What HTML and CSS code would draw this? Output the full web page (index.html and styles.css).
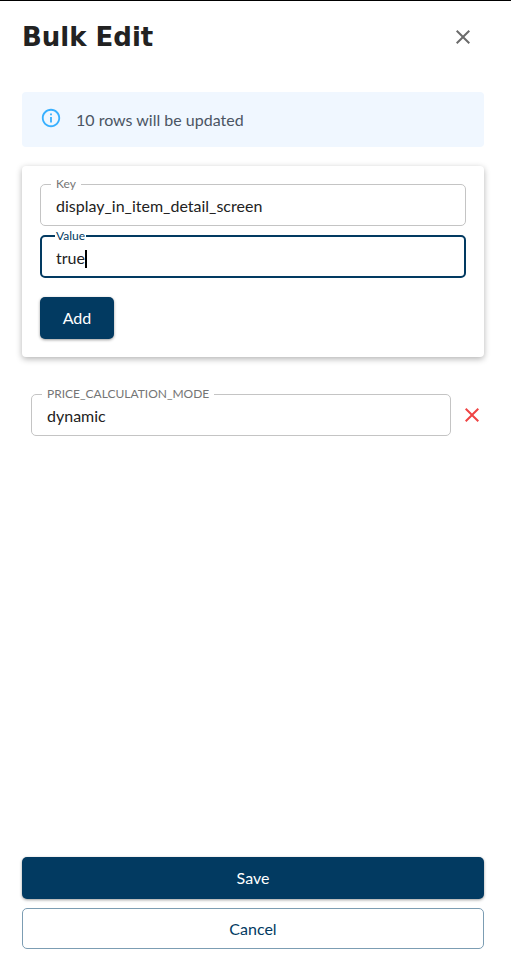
FILE: index.html
```html
<!DOCTYPE html>
<html lang="en">
<head>
    <meta charset="UTF-8">
    <meta name="viewport" content="width=device-width, initial-scale=1.0">
    <title>Bulk Edit</title>
    <link rel="stylesheet" href="styles.css">
</head>
<body>
    <div class="drawer">
        <div class="drawer-header">
            <h1 class="drawer-title">Bulk Edit</h1>
            <svg class="close-icon" width="24" height="24" viewBox="0 0 24 24">
                <path d="M19 6.41 17.59 5 12 10.59 6.41 5 5 6.41 10.59 12 5 17.59 6.41 19 12 13.41 17.59 19 19 17.59 13.41 12z"/>
            </svg>
        </div>

        <div class="info-alert">
            <svg class="info-icon" width="22" height="22" viewBox="0 0 24 24">
                <path d="M11 7h2v2h-2zm0 4h2v6h-2zm1-9C6.48 2 2 6.48 2 12s4.480 10 10 10 10-4.480 10-10S17.520 2 12 2zm0 18c-4.410 0-8-3.590-8-8s3.590-8 8-8 8 3.590 8 8-3.590 8-8 8z"/>
            </svg>
            <span>10 rows will be updated</span>
        </div>

        <div class="add-card">
            <fieldset class="field key-field">
                <legend>Key</legend>
                <div class="field-value">display_in_item_detail_screen</div>
            </fieldset>
            <fieldset class="field value-field">
                <legend>Value</legend>
                <div class="field-value">true<span class="caret"></span></div>
            </fieldset>
            <button class="btn btn-primary add-btn">Add</button>
        </div>

        <div class="attr-row">
            <fieldset class="field attr-field">
                <legend>PRICE_CALCULATION_MODE</legend>
                <div class="field-value">dynamic</div>
            </fieldset>
            <svg class="remove-icon" width="24" height="24" viewBox="0 0 24 24">
                <path d="M19 6.41 17.59 5 12 10.59 6.41 5 5 6.41 10.59 12 5 17.59 6.41 19 12 13.41 17.59 19 19 17.59 13.41 12z"/>
            </svg>
        </div>

        <div class="drawer-footer">
            <button class="btn btn-primary save-btn">Save</button>
            <button class="btn btn-outline cancel-btn">Cancel</button>
        </div>
    </div>
</body>
</html>
```
FILE: styles.css
```css
* {
    box-sizing: border-box;
}

body {
    margin: 0;
    background-color: #fff;
    font-family: 'Lato', sans-serif;
}

.drawer {
    height: 967px;
    border-top: 1px solid #000;
    padding: 0 27px 18px 22px;
    display: flex;
    flex-direction: column;
}

.drawer-header {
    display: flex;
    justify-content: space-between;
    align-items: center;
    height: 72px;
    padding-bottom: 1px;
    padding-right: 9px;
}

.drawer-title {
    margin: 0;
    font-family: 'DejaVu Sans', sans-serif;
    font-size: 26px;
    font-weight: 700;
    color: #222;
}

.close-icon {
    fill: #6b6b6b;
}

.info-alert {
    width: 462px;
    height: 55px;
    margin-top: 19px;
    padding-left: 18px;
    display: flex;
    align-items: center;
    gap: 14px;
    background-color: #f0f7ff;
    border-radius: 4px;
    color: #4b5563;
    font-size: 16px;
}

.info-icon {
    fill: #38b0ff;
    margin-top: -4px;
}

.add-card {
    width: 462px;
    height: 191px;
    margin-top: 19px;
    padding: 12px 18px 0;
    border-radius: 4px;
    background-color: #fff;
    box-shadow: 0 2px 6px rgba(0, 0, 0, 0.3);
    display: flex;
    flex-direction: column;
}

.field {
    margin: 0;
    padding: 0 15px;
    min-width: 0;
    border: 1px solid #c4c4c4;
    border-radius: 5px;
    height: 48px;
}

.field legend {
    padding: 0 5px;
    margin-left: -5px;
    font-size: 12px;
    line-height: 12px;
    color: #757575;
}

.field-value {
    font-size: 16px;
    line-height: 20px;
    margin-top: 6px;
    color: #222;
}

.key-field {
    width: 426px;
}

.value-field {
    width: 426px;
    margin-top: 4px;
    border: 2px solid #023a61;
    padding: 0 14px;
}

.value-field legend {
    padding: 0 1px;
    margin-left: -1px;
    color: #023a61;
}

.caret {
    display: inline-block;
    width: 2px;
    height: 18px;
    background-color: #000;
    vertical-align: -4px;
}

.btn {
    display: block;
    font-family: 'Lato', sans-serif;
    font-size: 16px;
    border-radius: 5px;
    cursor: pointer;
}

.btn-primary {
    border: none;
    padding: 0 0 2px;
    background-color: #023a61;
    color: #fff;
    box-shadow: 0 1px 3px rgba(0, 0, 0, 0.4);
}

.btn-outline {
    border: 1px solid #7c9db3;
    background-color: #fff;
    color: #023a61;
}

.add-btn {
    width: 74px;
    height: 42px;
    margin-top: 19px;
}

.attr-row {
    display: flex;
    align-items: center;
    margin-top: 31px;
    padding-left: 9px;
}

.attr-field {
    width: 420px;
}

.remove-icon {
    fill: #ef4444;
    margin-top: 6px;
    margin-left: 9px;
}

.drawer-footer {
    margin-top: auto;
    display: flex;
    flex-direction: column;
    gap: 9px;
}

.save-btn,
.cancel-btn {
    width: 462px;
}

.save-btn {
    height: 42px;
}

.cancel-btn {
    height: 41px;
}
```
